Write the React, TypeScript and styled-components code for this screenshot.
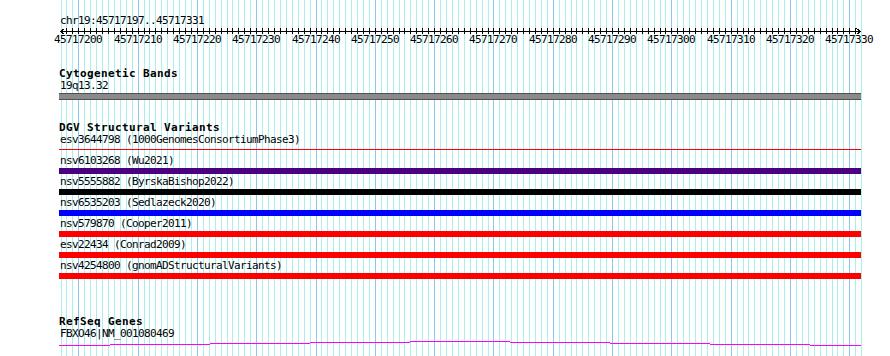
import React from "react";
import styled, { createGlobalStyle } from "styled-components";

const START = 45717197;
const END = 45717331;
const ORIGIN = 60.5;
const BP_PX = 5.931;
const TRACK_LEFT = 59;
const TRACK_RIGHT = 861;

const bpToX = (bp: number) => Math.round(ORIGIN + (bp - START) * BP_PX);

const gridBases: number[] = [];
for (let bp = START; bp <= END + 1; bp++) gridBases.push(bp);
const majorBases = gridBases.filter((bp) => bp % 10 === 0 && bp <= END);

type Feature = { name: string; color: string; thin?: boolean };

const variants: Feature[] = [
  { name: "esv3644798 (1000GenomesConsortiumPhase3)", color: "#ff0000", thin: true },
  { name: "nsv6103268 (Wu2021)", color: "#4b0082" },
  { name: "nsv5555882 (ByrskaBishop2022)", color: "#000000" },
  { name: "nsv6535203 (Sedlazeck2020)", color: "#0000ff" },
  { name: "nsv579870 (Cooper2011)", color: "#ff0000" },
  { name: "esv22434 (Conrad2009)", color: "#ff0000" },
  { name: "nsv4254800 (gnomADStructuralVariants)", color: "#ff0000" },
];

// intron "hat" drawn in 100px steps, peaking in the middle
const intronSteps = [59, 110, 210, 310, 410, 510, 610, 710, 810, 861];
const intronY = [5, 4, 3, 2, 1, 2, 3, 4, 5];

const GlobalStyle = createGlobalStyle`
  html, body {
    margin: 0;
    padding: 0;
    background: #ffffff;
  }
  body {
    font-family: "DejaVu Sans Mono", "Liberation Mono", monospace;
    color: #000;
  }
`;

const App: React.FC = () => {
  return (
    <Page>
      <GlobalStyle />
      <GridLayer width={890} height={356} shapeRendering="crispEdges">
        {gridBases.map((bp) => (
          <rect
            key={bp}
            x={bpToX(bp)}
            y={0}
            width={1}
            height={356}
            fill={bp % 10 === 0 ? "#8cc8ee" : "#aaeeee"}
          />
        ))}
      </GridLayer>

      <Column>
        <LocationLabel>chr19:45717197..45717331</LocationLabel>

        <RulerSvg width={890} height={7} shapeRendering="crispEdges">
          <rect x={60} y={4} width={801} height={1} fill="#000" />
          {gridBases.slice(1, -1).map((bp) => (
            <rect key={bp} x={bpToX(bp)} y={1} width={1} height={6} fill="#000" />
          ))}
          <path d="M60.5 4.5 L64.5 1.5 M60.5 4.5 L64.5 7.5" stroke="#000" strokeWidth={1} fill="none" />
          <path d="M860.5 4.5 L856.5 1.5 M860.5 4.5 L856.5 7.5" stroke="#000" strokeWidth={1} fill="none" />
        </RulerSvg>

        <ScaleRow>
          {majorBases.map((bp) => (
            <ScaleLabel key={bp} style={{ left: bpToX(bp) }}>
              {bp}
            </ScaleLabel>
          ))}
        </ScaleRow>

        <Track $top={22}>
          <TrackTitle>Cytogenetic Bands</TrackTitle>
          <FeatureLabel>19q13.32</FeatureLabel>
          <Band />
        </Track>

        <Track $top={22}>
          <TrackTitle>DGV Structural Variants</TrackTitle>
          {variants.map((v) => (
            <FeatureRow key={v.name}>
              <FeatureLabel>{v.name}</FeatureLabel>
              <FeatureSlot>
                <FeatureBar $color={v.color} $thin={v.thin} />
              </FeatureSlot>
            </FeatureRow>
          ))}
        </Track>

        <Track $top={35}>
          <TrackTitle>RefSeq Genes</TrackTitle>
          <FeatureLabel>FBXO46|NM_001080469</FeatureLabel>
          <GeneSvg width={TRACK_RIGHT - TRACK_LEFT} height={7} shapeRendering="crispEdges">
            {intronY.map((y, i) => (
              <rect
                key={i}
                x={intronSteps[i] - TRACK_LEFT}
                y={y}
                width={intronSteps[i + 1] - intronSteps[i]}
                height={1}
                fill="#ff00ff"
              />
            ))}
          </GeneSvg>
        </Track>
      </Column>
    </Page>
  );
};

export default App;

const Page = styled.div`
  position: relative;
  width: 890px;
  height: 356px;
  overflow: hidden;
  background: #ffffff;
`;

const GridLayer = styled.svg`
  position: absolute;
  top: 0;
  left: 0;
  display: block;
`;

const Column = styled.div`
  position: relative;
  display: flex;
  flex-direction: column;
  padding-top: 15px;
`;

const SmallText = styled.div`
  font-size: 11px;
  letter-spacing: -0.62px;
  line-height: 12px;
  white-space: nowrap;
`;

const LocationLabel = styled(SmallText)`
  margin-left: 60px;
`;

const RulerSvg = styled.svg`
  display: block;
`;

const ScaleRow = styled.div`
  position: relative;
  height: 12px;
`;

const ScaleLabel = styled.span`
  position: absolute;
  top: 0;
  transform: translateX(-50%);
  font-size: 11px;
  letter-spacing: -0.62px;
  line-height: 12px;
  white-space: nowrap;
`;

const Track = styled.section<{ $top: number }>`
  display: flex;
  flex-direction: column;
  margin-top: ${(p) => p.$top}px;
  padding-left: ${TRACK_LEFT}px;
`;

const TrackTitle = styled.h2`
  margin: 0;
  font-size: 11px;
  letter-spacing: 0.38px;
  line-height: 12px;
  font-weight: bold;
  white-space: nowrap;
`;

const FeatureLabel = styled(SmallText)`
  padding-left: 1px;
`;

const Band = styled.div`
  box-sizing: border-box;
  width: ${TRACK_RIGHT - TRACK_LEFT}px;
  height: 7px;
  margin-top: 1px;
  background: #8a8a8a;
  border-top: 1px solid #505050;
  border-bottom: 1px solid #505050;
`;

const FeatureRow = styled.div`
  display: flex;
  flex-direction: column;
  padding-bottom: 2px;
`;

const FeatureSlot = styled.div`
  display: flex;
  flex-direction: column;
  height: 6px;
  margin-top: 1px;
`;

const FeatureBar = styled.div<{ $color: string; $thin?: boolean }>`
  width: ${TRACK_RIGHT - TRACK_LEFT}px;
  height: ${(p) => (p.$thin ? 1 : 6)}px;
  margin-top: ${(p) => (p.$thin ? 2 : 0)}px;
  background: ${(p) => p.$color};
`;

const GeneSvg = styled.svg`
  display: block;
`;
